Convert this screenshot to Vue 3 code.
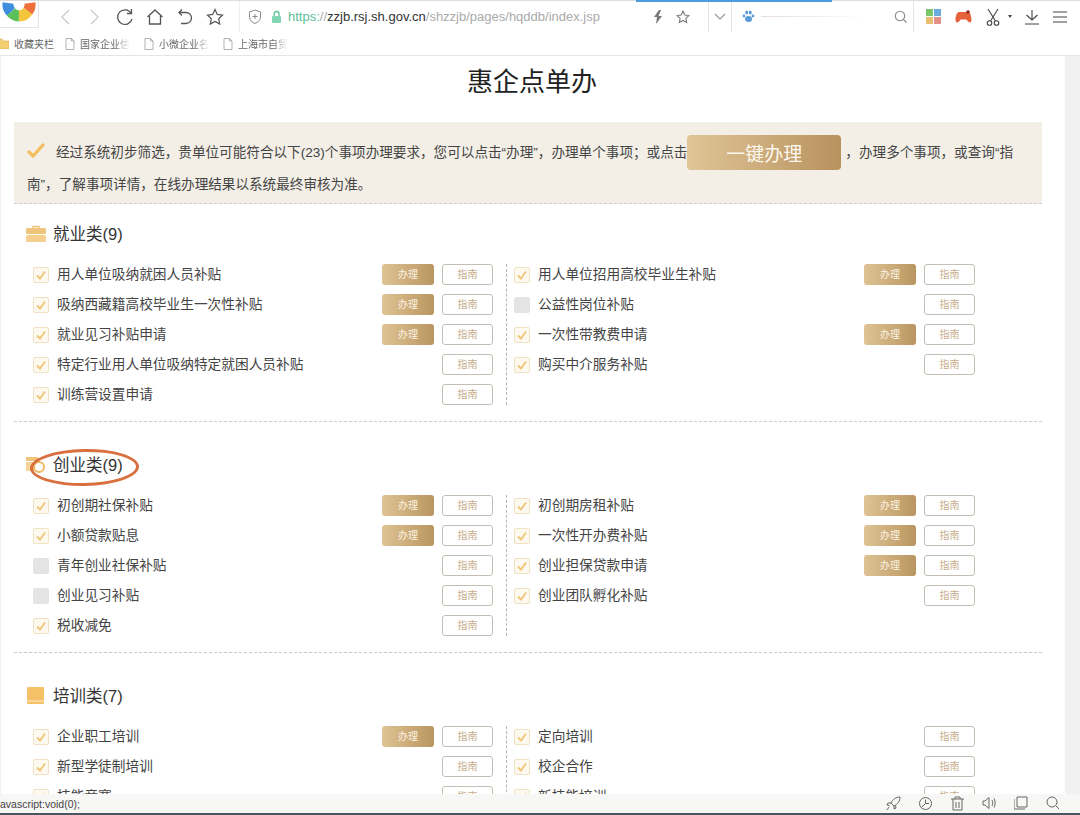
<template>
  <div class="window">
    <!-- 浏览器工具栏 -->
    <div class="toolbar">
      <div class="progress"></div>
      <div class="logo">
        <svg width="38" height="25" viewBox="0 0 38 25" fill="none" stroke-width="11">
          <path d="M8 2a11 11 0 0 0 3 9" stroke="#3f8fe0" />
          <path d="M11 11a11 11 0 0 0 8 4" stroke="#5cc05a" />
          <path d="M19 15a11 11 0 0 0 9-5" stroke="#f5c63c" />
          <path d="M28 10a11 11 0 0 0 2-8" stroke="#ee6f3a" />
        </svg>
      </div>
      <div class="nav">
        <span class="slot">
          <svg width="12" height="18" viewBox="0 0 12 18" fill="none" stroke="#c9c9c9" stroke-width="1.3"><path d="M10 2 3 9l7 7" /></svg>
        </span>
        <span class="slot">
          <svg width="12" height="18" viewBox="0 0 12 18" fill="none" stroke="#c9c9c9" stroke-width="1.3"><path d="m2 2 7 7-7 7" /></svg>
        </span>
        <span class="slot">
          <svg width="18" height="18" viewBox="0 0 18 18" fill="none" stroke="#555" stroke-width="1.3"><path d="M15 5a7.3 7.3 0 1 0 1 6" /><path d="M15.500 1v4.500H11" /></svg>
        </span>
        <span class="slot">
          <svg width="18" height="18" viewBox="0 0 18 18" fill="none" stroke="#555" stroke-width="1.3"><path d="M1.500 9 9 2l7.500 7" /><path d="M3.500 8v8h11V8" /></svg>
        </span>
        <span class="slot">
          <svg width="16" height="18" viewBox="0 0 16 18" fill="none" stroke="#555" stroke-width="1.3"><path d="M5 1.500 2 4.500l3 3" /><path d="M2 4.500h7a5.500 5.500 0 0 1 0 11H4" /></svg>
        </span>
        <span class="slot">
          <svg width="18" height="18" viewBox="0 0 18 18" fill="none" stroke="#555" stroke-width="1.2"><path d="m9 1.500 2.300 4.900 5.200.7-3.800 3.600 1 5.300L9 13.400l-4.700 2.600 1-5.300-3.800-3.600 5.200-.7z" /></svg>
        </span>
      </div>
      <div class="address">
        <svg class="shield" width="14" height="16" viewBox="0 0 14 16" fill="none" stroke="#8a8a8a" stroke-width="1"><path d="M7 1 1.500 3v5c0 3.500 3 5.500 5.500 6.500 2.500-1 5.500-3 5.500-6.500V3z" /><path d="M7 5v5M4.500 7.500h5" /></svg>
        <svg class="lock" width="11" height="13" viewBox="0 0 11 13"><path d="M3 6V4a2.500 2.500 0 0 1 5 0v2" fill="none" stroke="#57c296" stroke-width="1.300" /><rect x="1" y="6" width="9" height="7" rx="1" fill="#7fd6b0" /></svg>
        <span class="url"><span class="scheme">https:</span><span class="light">//</span><span class="host">zzjb.rsj.sh.gov.cn</span><span class="light">/shzzjb/pages/hqddb/index.jsp</span></span>
        <svg class="bolt" width="10" height="14" viewBox="0 0 10 14"><path d="M6 0 1 7h3l-1 7 6-8H5.500L8 0z" fill="#777" /></svg>
        <svg class="star-sm" width="14" height="14" viewBox="0 0 18 18" fill="none" stroke="#777" stroke-width="1.400"><path d="m9 1.500 2.300 4.900 5.200.7-3.800 3.600 1 5.300L9 13.400l-4.700 2.600 1-5.300-3.800-3.600 5.200-.7z" /></svg>
      </div>
      <div class="drop">
        <svg width="12" height="8" viewBox="0 0 12 8" fill="none" stroke="#999" stroke-width="1.200"><path d="m1 1 5 5 5-5" /></svg>
      </div>
      <div class="searchbox">
        <svg width="13" height="13" viewBox="0 0 13 13" fill="#5b9bd8"><ellipse cx="6.500" cy="9" rx="3.500" ry="3" /><circle cx="2" cy="6" r="1.400" /><circle cx="11" cy="6" r="1.400" /><ellipse cx="4.700" cy="2.500" rx="1.400" ry="1.900" /><ellipse cx="8.300" cy="2.500" rx="1.400" ry="1.900" /></svg>
        <span class="blurred"></span>
        <svg class="mag" width="13" height="13" viewBox="0 0 13 13" fill="none" stroke="#888" stroke-width="1.100"><circle cx="6" cy="6" r="4.700" /><path d="m9.500 9.500 3 3" /></svg>
      </div>
      <div class="tools">
        <svg class="tool-grid" width="15" height="15" viewBox="0 0 15 15"><rect width="7" height="7" fill="#7bc66a" /><rect x="8" width="7" height="7" fill="#6aace0" /><rect y="8" width="7" height="7" fill="#e8bf6e" /><rect x="8" y="8" width="7" height="7" fill="#e38f86" /></svg>
        <svg class="tool-game" width="17" height="14" viewBox="0 0 17 14"><path d="M4 2h9c2 0 3.500 4 3.500 8 0 3-2.500 3-4 1l-1-1.500h-6L4.500 11c-1.500 2-4 2-4-1 0-4 1.500-8 3.500-8z" fill="#e5623a" /><circle cx="13" cy="2" r="1.800" fill="#8c2b1a" /></svg>
        <svg class="tool-cut" width="14" height="18" viewBox="0 0 14 18" fill="none" stroke="#444" stroke-width="1.100"><path d="M2 1l7.500 12M12 1 4.500 13" /><circle cx="3.500" cy="15" r="2.300" /><circle cx="10.500" cy="15" r="2.300" /></svg>
        <span class="tool-caret"></span>
        <svg class="tool-down" width="14" height="16" viewBox="0 0 14 16" fill="none" stroke="#444" stroke-width="1.100"><path d="M7 1v10M1.500 6 7 11l5.500-5M0 15h14" /></svg>
        <svg class="tool-menu" width="14" height="12" viewBox="0 0 14 12" stroke="#444" stroke-width="1.100"><path d="M0 1h14M0 6h14M0 11h14" /></svg>
      </div>
    </div>

    <!-- 收藏夹 -->
    <div class="bookmarks">
      <svg class="folder" width="9" height="11" viewBox="0 0 9 11"><path d="M-4 1h6l1 2h6v8H-4z" fill="#f3cf72" stroke="#d9ad4d" stroke-width=".6" /></svg>
      <span class="fav">收藏夹栏</span>
      <span v-for="b in bookmarks" :key="b" class="bookmark">
        <svg width="10" height="12" viewBox="0 0 10 12" fill="none" stroke="#aaa" stroke-width=".9"><path d="M1 .5h5.500L9 3v8.500H1zM6.500.5V3H9" /></svg>
        <span class="mark-text">{{ b }}</span>
      </span>
    </div>

    <div class="viewport">
      <div class="page">
        <h1 class="title">惠企点单办</h1>

        <div class="notice">
          <svg class="notice-check" width="18" height="16" viewBox="0 0 18 16" fill="none" stroke="#f3bd5f" stroke-width="3.200" stroke-linecap="round"><path d="m2 9 4 4L16 2" /></svg>经过系统初步筛选，贵单位可能符合以下(23)个事项办理要求，您可以点击“办理”，办理单个事项；或点击<button type="button" class="one-key">一键办理</button>，办理多个事项，或查询“指<br />南”，了解事项详情，在线办理结果以系统最终审核为准。
        </div>

        <section v-for="s in sections" :key="s.name" class="section">
          <div class="sec-head">
            <svg v-if="s.icon === 'case'" width="20" height="17" viewBox="0 0 20 17"><path d="M7 3V1.500h6V3" fill="none" stroke="#eec277" stroke-width="1.500" /><rect y="3" width="20" height="6" rx="1.500" fill="#f0c47a" /><rect y="10" width="20" height="7" rx="1.500" fill="#f5cf8d" /></svg>
            <svg v-else-if="s.icon === 'coin'" width="20" height="17" viewBox="0 0 20 17"><rect y="1" width="12" height="4" fill="#f0c47a" /><rect y="6" width="9" height="9" fill="#f5d497" /><circle cx="13" cy="11" r="5" fill="none" stroke="#eeb95f" stroke-width="2" /></svg>
            <svg v-else width="20" height="17" viewBox="0 0 20 17"><rect x="1" width="17" height="17" rx="1" fill="#f4c068" /><rect x="1" y="13.500" width="17" height="1.200" fill="#fbe5bd" /></svg>
            <span class="sec-name">{{ s.name }}</span>
            <span v-if="s.circled" class="circle-mark"></span>
          </div>
          <div class="sec-body">
            <div v-for="(col, i) in s.cols" :key="i" class="col" :class="i === 0 ? 'col-left' : 'col-right'">
              <div v-for="item in col" :key="item.label" class="row">
                <span class="box" :class="{ off: item.off }">
                  <svg v-if="!item.off" width="12" height="12" viewBox="0 0 12 12" fill="none" stroke="#f0c577" stroke-width="1.800"><path d="m2 6.500 3 3 5-7" /></svg>
                </span>
                <span class="label">{{ item.label }}</span>
                <button v-if="item.apply" type="button" class="btn-apply">办理</button>
                <button type="button" class="btn-guide">指南</button>
              </div>
            </div>
          </div>
        </section>
      </div>
      <div class="scrollbar"></div>
    </div>

    <!-- 状态栏 -->
    <div class="statusbar">
      <span class="status-text">avascript:void(0);</span>
      <div class="status-icons">
        <span class="s-slot"><svg width="15" height="15" viewBox="0 0 15 15" fill="none" stroke="#666" stroke-width="1"><path d="M14 1c-4 0-7 2-9 6l3 3c4-2 6-5 6-9zM5 7H2L1 9l2.500.5M8 10v3l2-1-.5-2.500M3 11l-2 3" /></svg></span>
        <span class="s-slot"><svg width="15" height="15" viewBox="0 0 15 15" fill="none" stroke="#666" stroke-width="1"><circle cx="7.500" cy="7.500" r="6" /><path d="M7.500 3.500v4H11M4 11l3.500-3.500" /></svg></span>
        <span class="s-slot"><svg width="13" height="15" viewBox="0 0 13 15" fill="none" stroke="#666" stroke-width="1"><path d="M0 3h13M4 3V1h5v2M2 3v11h9V3M5 6v6M8 6v6" /></svg></span>
        <span class="s-slot"><svg width="14" height="14" viewBox="0 0 14 14" fill="none" stroke="#666" stroke-width="1"><path d="M1 5v4h2l4 3.500V1.500L3 5zM10 4c1 2 1 4 0 6M12 2.500c1.500 3 1.500 6 0 9" /></svg></span>
        <span class="s-slot"><svg width="14" height="14" viewBox="0 0 14 14" fill="none" stroke="#666" stroke-width="1"><path d="M3 1h10v10H3zM0 3v10h11" /></svg></span>
        <span class="s-slot"><svg width="14" height="14" viewBox="0 0 14 14" fill="none" stroke="#666" stroke-width="1"><circle cx="6" cy="6" r="5" /><path d="m10 10 3 3" /></svg></span>
      </div>
    </div>
    <div class="bottom-line"></div>
  </div>
</template>

<script setup>
const bookmarks = ['国家企业信', '小微企业名', '上海市自贸']

const sections = [
  {
    name: '就业类(9)',
    icon: 'case',
    cols: [
      [
        { label: '用人单位吸纳就困人员补贴', apply: true },
        { label: '吸纳西藏籍高校毕业生一次性补贴', apply: true },
        { label: '就业见习补贴申请', apply: true },
        { label: '特定行业用人单位吸纳特定就困人员补贴' },
        { label: '训练营设置申请' }
      ],
      [
        { label: '用人单位招用高校毕业生补贴', apply: true },
        { label: '公益性岗位补贴', off: true },
        { label: '一次性带教费申请', apply: true },
        { label: '购买中介服务补贴' }
      ]
    ]
  },
  {
    name: '创业类(9)',
    icon: 'coin',
    circled: true,
    cols: [
      [
        { label: '初创期社保补贴', apply: true },
        { label: '小额贷款贴息', apply: true },
        { label: '青年创业社保补贴', off: true },
        { label: '创业见习补贴', off: true },
        { label: '税收减免' }
      ],
      [
        { label: '初创期房租补贴', apply: true },
        { label: '一次性开办费补贴', apply: true },
        { label: '创业担保贷款申请', apply: true },
        { label: '创业团队孵化补贴' }
      ]
    ]
  },
  {
    name: '培训类(7)',
    icon: 'book',
    cols: [
      [
        { label: '企业职工培训', apply: true },
        { label: '新型学徒制培训' },
        { label: '技能竞赛' }
      ],
      [
        { label: '定向培训' },
        { label: '校企合作' },
        { label: '新技能培训' }
      ]
    ]
  }
]
</script>

<style>
html,
body {
  margin: 0;
  background: #fff;
}
</style>

<style scoped>
.window {
  width: 1080px;
  height: 815px;
  display: flex;
  flex-direction: column;
  overflow: hidden;
  font-family: "Liberation Sans", "Noto Sans CJK SC", sans-serif;
  color: #444;
}

/* 工具栏 */
.toolbar {
  position: relative;
  height: 32px;
  flex: none;
  display: flex;
  align-items: center;
  border-top: 1px solid #ddd;
  box-sizing: border-box;
}
.progress {
  position: absolute;
  left: 636px;
  top: -1px;
  width: 196px;
  height: 2px;
  background: #4a9be0;
}
.logo {
  width: 38px;
  height: 26px;
  align-self: flex-start;
  border-right: 1px solid #e4e4e4;
  border-bottom: 1px solid #e4e4e4;
  margin-right: 11px;
}
.nav {
  display: flex;
  width: 189px;
}
.slot {
  width: 30px;
  display: flex;
  justify-content: center;
}
.address {
  width: 469px;
  height: 100%;
  box-sizing: border-box;
  border-left: 1px solid #eee;
  display: flex;
  align-items: center;
  padding-left: 8px;
}
.lock {
  margin-left: 9px;
}
.url {
  margin-left: 6px;
  font-size: 13px;
  white-space: nowrap;
  width: 365px;
  color: #333;
}
.scheme {
  color: #5cc09a;
}
.light {
  color: #aaa;
}
.star-sm {
  margin-left: 13px;
}
.drop {
  width: 22px;
  height: 100%;
  border-left: 1px solid #e4e4e4;
  display: flex;
  align-items: center;
  justify-content: center;
}
.searchbox {
  width: 183px;
  height: 100%;
  box-sizing: border-box;
  border-left: 1px solid #e4e4e4;
  border-right: 1px solid #e4e4e4;
  display: flex;
  align-items: center;
  padding: 0 6px 0 10px;
}
.blurred {
  flex: 1;
  height: 1px;
  margin: 0 30px 0 6px;
  background: linear-gradient(90deg, #e8dcdc, #f3eaea, #fff);
}
.tools {
  display: flex;
  align-items: center;
  flex: 1;
  padding-left: 12px;
}
.tool-game {
  margin-left: 14px;
}
.tool-cut {
  margin-left: 14px;
}
.tool-caret {
  margin-left: 8px;
  border-left: 2.500px solid transparent;
  border-right: 2.500px solid transparent;
  border-top: 3px solid #444;
}
.tool-down {
  margin-left: 13px;
}
.tool-menu {
  margin-left: 14px;
}

/* 收藏夹 */
.bookmarks {
  height: 24px;
  flex: none;
  box-sizing: border-box;
  border-bottom: 1px solid #e6e6e6;
  display: flex;
  align-items: center;
  font-size: 10px;
  color: #666;
}
.fav {
  margin-left: 5px;
  width: 51px;
}
.bookmark {
  width: 79px;
  display: flex;
  align-items: center;
  gap: 5px;
}
.mark-text {
  -webkit-mask-image: linear-gradient(90deg, #000 70%, transparent 100%);
  mask-image: linear-gradient(90deg, #000 70%, transparent 100%);
}

/* 页面 */
.viewport {
  flex: 1;
  min-height: 0;
  display: flex;
  overflow: hidden;
}
.page {
  width: 1065px;
  flex: none;
  box-sizing: border-box;
  padding: 0 23px 0 13px;
  border-left: 1px solid #f0f0f0;
}
.scrollbar {
  flex: 1;
  background: #f1f1f1;
}
.title {
  margin: 0 0 14px;
  padding-left: 8px;
  height: 52px;
  line-height: 52px;
  font-size: 26px;
  font-weight: 400;
  text-align: center;
  color: #222;
}
.notice {
  height: 82px;
  box-sizing: border-box;
  padding: 15px 0 0 13px;
  background: #f3efe7;
  border-bottom: 1px dashed #c9ccd0;
  font-size: 13.600px;
  line-height: 32px;
  white-space: nowrap;
  color: #444;
}
.notice-check {
  vertical-align: -2px;
  margin-right: 11px;
}
.one-key {
  display: inline-block;
  vertical-align: middle;
  width: 154px;
  height: 35px;
  margin: -4px 4px -2px 0;
  padding: 0;
  border: none;
  border-radius: 4px;
  background: linear-gradient(90deg, #e0c596, #b8925f);
  color: #fdf8ef;
  font-family: inherit;
  font-size: 19px;
}
.section {
  padding: 30px 0 16px 12px;
  border-bottom: 1px dashed #c9ccd0;
}
.section:first-of-type {
  padding-top: 17px;
}
.sec-head {
  position: relative;
  height: 24px;
  margin-bottom: 19px;
  display: flex;
  align-items: center;
  gap: 7px;
}
.sec-name {
  font-size: 16.500px;
  color: #333;
}
.circle-mark {
  position: absolute;
  left: 4px;
  top: -3px;
  width: 109px;
  height: 37px;
  box-sizing: border-box;
  border: 3px solid #d9703f;
  border-radius: 50%;
  transform: rotate(-1deg);
}
.sec-body {
  display: flex;
}
.col {
  display: flex;
  flex-direction: column;
  gap: 9px;
}
.col-left {
  width: 481px;
  box-sizing: border-box;
  padding: 0 13px 0 7px;
  border-right: 1px dashed #b5b5b5;
}
.col-right {
  flex: 1;
  padding: 0 67px 0 7px;
}
.row {
  height: 21px;
  display: flex;
  align-items: center;
}
.box {
  width: 16px;
  height: 16px;
  box-sizing: border-box;
  border: 1px solid #f0e2c2;
  border-radius: 2px;
  background: #fdf9ef;
  display: flex;
  align-items: center;
  justify-content: center;
  flex: none;
}
.box.off {
  background: #e4e4e4;
  border-color: #e4e4e4;
}
.label {
  flex: 1;
  margin-left: 8px;
  padding-bottom: 4px;
  font-size: 13.700px;
  color: #444;
  white-space: nowrap;
}
.btn-apply,
.btn-guide {
  height: 21px;
  padding: 0 0 2px;
  border-radius: 3px;
  font-family: inherit;
  font-size: 10px;
  flex: none;
}
.btn-apply {
  width: 52px;
  margin-right: 8px;
  border: none;
  background: linear-gradient(90deg, #dfc394, #b99660);
  color: #fbf3e2;
}
.btn-guide {
  width: 51px;
  border: 1px solid #c4bfb4;
  background: #fff;
  color: #c7ac8b;
}

/* 状态栏 */
.statusbar {
  height: 19px;
  flex: none;
  display: flex;
  align-items: center;
  background: #f7f7f5;
  font-size: 10.500px;
  color: #444;
}
.status-text {
  flex: 1;
}
.status-icons {
  display: flex;
  width: 192px;
  margin-right: 11px;
}
.s-slot {
  width: 32px;
  display: flex;
  justify-content: center;
}
.bottom-line {
  height: 2px;
  flex: none;
  background: #4b5660;
}
</style>
